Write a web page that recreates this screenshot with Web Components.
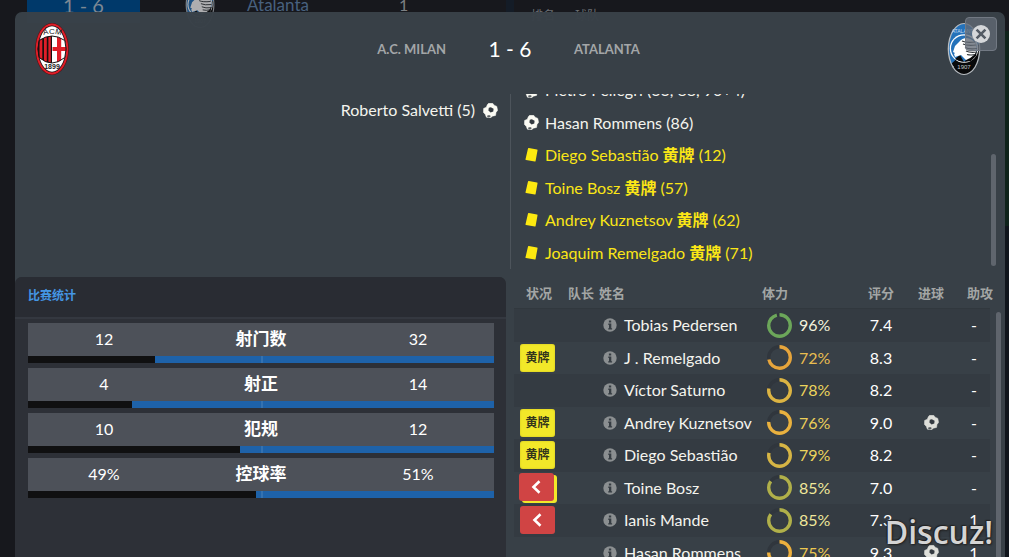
<!DOCTYPE html>
<html lang="zh-CN">
<head>
<meta charset="utf-8">
<title>A.C. Milan 1 - 6 Atalanta</title>
<style>
  html, body { margin: 0; height: 100%; }
  body {
    position: relative;
    overflow: hidden;
    background: #17181d;
    color: #f4f4ee;
    font: 16px/20px Lato, "Noto Sans CJK SC", sans-serif;
  }
</style>
</head>
<body>
<page-backdrop></page-backdrop>
<match-dialog></match-dialog>
<water-mark>Discuz!</water-mark>

<template id="backdrop">
  <style>
    :host { display: grid; grid-template-columns: 15px 1fr 8px 1fr 4px; height: 100%; overflow: hidden; }
    .gap { background: #141c27; }
    .left { display: flex; align-items: flex-start; height: 36px; margin-top: -13px; line-height: 36px; color: #48617f; }
    .score { width: 113px; margin-left: 12px; text-align: center; font-size: 20px; background: #00396a; color: #7d8893; }
    club-crest { margin: -5px 32px 0 45px; opacity: .65; }
    .name { width: 152px; font-size: 17px; }
    .pts { color: #7d8084; }
    .right { display: flex; gap: 20px; padding: 8px 17px; font-size: 12px; line-height: 16px; color: #6d7074; }
    .pitch { margin-top: 31px; background: linear-gradient(#0f231b 195px, #10151c 195px); }
  </style>
  <div></div>
  <div class="left">
    <span class="score">1 - 6</span>
    <club-crest club="atalanta" size="46"></club-crest>
    <span class="name">Atalanta</span><span class="pts">1</span>
  </div>
  <div class="gap"></div>
  <div class="right"><span>排名</span><span>球队</span></div>
  <div class="pitch"></div>
</template>

<template id="dialog">
  <style>
    :host {
      position: absolute; inset: 12px 4px 0 15px;
      display: flex; flex-direction: column; overflow: hidden;
      border-radius: 7px 7px 0 0; background: rgba(57, 65, 72, .98);
    }
    header {
      flex: none; display: grid; align-items: center; box-sizing: border-box;
      grid-template-columns: 38px 1fr 128px 1fr 34px;
      height: 82px; padding: 0 24px 8px 20px;
    }
    h2 { margin: 0; font-size: 13px; line-height: 16px; font-weight: 700; color: #a3a6a8; text-transform: uppercase; }
    .home { text-align: right; }
    .score { text-align: center; font-size: 21px; line-height: 28px; color: #fff; }
    button {
      position: absolute; top: 5px; right: 8px; width: 32px; height: 34px; padding: 0;
      display: grid; place-items: center; border: 1px solid #727983; border-radius: 4px;
      background: rgba(98, 105, 117, .78);
    }
    .events { flex: none; display: grid; grid-template-columns: 1fr 1fr; height: 175px; margin-bottom: 8px; }
    .side { display: flex; overflow: hidden; }
    .side.h { align-items: flex-start; justify-content: flex-end; padding-right: 12px; }
    .side.a { justify-content: space-between; border-left: 1px solid #4d545b; padding: 0 9px 0 13px; }
    ul { list-style: none; margin: 0; padding: 0; display: flex; flex-direction: column; }
    .a ul { justify-content: flex-end; }
    .thumb { width: 5px; height: 112px; margin-top: 60px; border-radius: 3px; background: #5f656d; }
    .lower { flex: 1; min-height: 0; display: grid; grid-template-columns: 1fr 1fr; gap: 8px; }
  </style>
  <header>
    <club-crest club="milan" size="52"></club-crest>
    <h2 class="home">A.C. Milan</h2>
    <div class="score">1 - 6</div>
    <h2>Atalanta</h2>
    <club-crest club="atalanta" size="52"></club-crest>
  </header>
  <button type="button" aria-label="Close">
    <svg width="18" height="18" viewBox="0 0 18 18"><circle cx="9" cy="9" r="9" fill="#d5d7da"/><path d="M4.6 4.6l8.8 8.8M13.4 4.6l-8.8 8.8" stroke="#555c66" stroke-width="2.6"/></svg>
  </button>
  <section class="events">
    <div class="side h">
      <ul><match-event kind="goal" side="home">Roberto Salvetti (5)</match-event></ul>
    </div>
    <div class="side a">
      <ul>
        <match-event kind="goal">Pietro Pellegri (33, 88, 90+4)</match-event>
        <match-event kind="goal">Hasan Rommens (86)</match-event>
        <match-event kind="card">Diego Sebastião <b>黄牌</b> (12)</match-event>
        <match-event kind="card">Toine Bosz <b>黄牌</b> (57)</match-event>
        <match-event kind="card">Andrey Kuznetsov <b>黄牌</b> (62)</match-event>
        <match-event kind="card">Joaquim Remelgado <b>黄牌</b> (71)</match-event>
      </ul>
      <div class="thumb"></div>
    </div>
  </section>
  <div class="lower">
    <stats-panel heading="比赛统计">
      <stat-row home="12" away="32">射门数</stat-row>
      <stat-row home="4" away="14">射正</stat-row>
      <stat-row home="10" away="12">犯规</stat-row>
      <stat-row home="49" away="51" unit="%">控球率</stat-row>
    </stats-panel>
    <player-table></player-table>
  </div>
</template>

<template id="event">
  <style>
    :host { display: flex; align-items: center; gap: 6px; height: 32px; flex: none; white-space: nowrap; }
    :host(:nth-child(even)) { height: 33px; }
    :host([side="home"]) { flex-direction: row-reverse; gap: 8px; }
    :host([kind="card"]) { color: #fbe616; }
    ::slotted(b) { font-weight: 700; }
    svg { display: block; }
    .goal, .card { display: none; }
    :host([kind="goal"]) .goal, :host([kind="card"]) .card { display: block; }
  </style>
  <ball-icon class="goal"></ball-icon>
  <svg class="card" width="15" height="14" viewBox="-1 0 15 14"><path d="M3 .6Q3.200 0 3.800.1L12 1.600Q12.700 1.700 12.500 2.400L10.600 12.900Q10.400 13.700 9.800 13.600L1 12.100Q.4 12 .5 11.300z" fill="#fde910"/></svg>
  <span><slot></slot></span>
</template>

<template id="stats">
  <style>
    :host { display: block; overflow: hidden; border-radius: 7px 7px 0 0; background: #2d3037; }
    h3 { margin: 0; padding: 0 13px; height: 40px; font-size: 12px; line-height: 38px; font-weight: 700; color: #4496e4; background: #292c33; border-bottom: 2px solid #343840; }
    .rows { display: flex; flex-direction: column; gap: 5px; padding: 4px 12px 0 13px; }
  </style>
  <h3></h3>
  <div class="rows"><slot></slot></div>
</template>

<template id="stat">
  <style>
    :host { display: block; color: #fff; }
    .line { display: grid; grid-template-columns: 1fr 1fr 1fr; gap: 5px; text-align: center; line-height: 32px; height: 33px; background: #4d5159; }
    b { font-size: 17px; }
    .bar { position: relative; display: flex; height: 7px; }
    .bar::after { content: ""; position: absolute; left: 50%; top: 0; width: 2px; height: 7px; background: rgba(255, 255, 255, .1); }
    .h { background: #101011; }
    .a { background: #1e62a9; }
  </style>
  <div class="line"><span class="hv"></span><b><slot></slot></b><span class="av"></span></div>
  <div class="bar"><div class="h"></div><div class="a"></div></div>
</template>

<template id="players">
  <style>
    :host { display: flex; justify-content: space-between; align-items: flex-start; padding-right: 4px; overflow: hidden; }
    .wrap { flex: 1; }
    table { width: 100%; table-layout: fixed; border-collapse: collapse; }
    th, td { padding: 0; text-align: left; white-space: nowrap; }
    th { height: 31px; padding-top: 2px; box-sizing: border-box; font-size: 13px; line-height: 16px; font-weight: 700; color: #a3a6a5; }
    thead { border-bottom: 1px solid #31383e; }
    td { height: 32px; line-height: 20px; }
    tbody tr:nth-child(odd) { background: #343b42; }
    tbody tr:nth-child(odd) td { height: 33px; }
    .status { width: 50px; } th.status { padding-left: 12px; }
    td.status { padding-left: 6px; box-sizing: border-box; }
    .captain { width: 32px; } th.captain { padding-left: 4px; }
    th.name { padding-left: 3px; }
    td.name { padding-left: 7px; }
    .condition { width: 98px; }
    .rating { width: 42px; text-align: center; } td.rating, td.assists { color: #fff; }
    .goals { width: 58px; text-align: center; }
    td.assists { padding-right: 2px; text-align: center; }
    th.assists { width: 30px; padding-left: 7px; }
    .cell { display: flex; align-items: center; }
    .name .cell { gap: 7px; }
    .condition .cell { gap: 7px; padding-left: 5px; }
    svg { display: block; flex: none; }
    ball-icon { margin: 0 auto; width: 15px; opacity: .85; }
    .thumb { width: 5px; align-self: stretch; margin: 35px 0 0 6px; border-radius: 3px 3px 0 0; background: #5f656d; }
  </style>
  <div class="wrap">
    <table>
      <thead><tr>
        <th class="status">状况</th><th class="captain">队长</th><th class="name">姓名</th>
        <th class="condition">体力</th><th class="rating">评分</th><th class="goals">进球</th><th class="assists">助攻</th>
      </tr></thead>
      <tbody></tbody>
    </table>
  </div>
  <div class="thumb"></div>
</template>

<template id="badge">
  <style>
    :host { display: block; width: 35px; height: 28px; border-radius: 3px; font-size: 12px; line-height: 28px; font-weight: 700; text-align: center; color: #34361c; background: #f2e829; box-shadow: inset 0 0 2px #c9bb20; }
    :host([kind^="off"]) { display: grid; place-items: center; background: #d04444; box-shadow: none; }
    :host([kind="off-booked"]) { margin-left: -1px; margin-top: -2px; box-shadow: 3px 2px 0 #f2e829; }
    svg { display: none; }
    :host([kind^="off"]) svg { display: block; }
  </style>
  <slot></slot>
  <svg width="12" height="14" viewBox="0 0 12 14"><path d="M8.500 1.300L2.500 7l6 5.700" fill="none" stroke="#fff" stroke-width="2.600"/></svg>
</template>

<template id="ball">
  <style>:host { display: block; } svg { display: block; }</style>
  <svg width="15" height="15" viewBox="0 0 15 15">
    <path d="M4.400 1.600L5.600.3 9.600.2 11.200 2.200 13.800 3.400 14.600 7.400 13 9.400 12.600 12.400 9.400 13.200 7.600 14.700 3.400 14.200 2.200 11.200.4 9.400.6 5.400 3.300 4.200z" fill="#fbfbf4" stroke="#fbfbf4" stroke-width=".5" stroke-linejoin="round"/>
    <path d="M7.800 4.200l2.800 1.500-.3 2.800-2.700 1L5.400 7.500l.4-2.700z" fill="#343a40"/>
    <path d="M4.600 12.200l2.600.1.400 1.500-2 .6-1.600-.9z" fill="#5a5f63"/>
  </svg>
</template>

<template id="milan">
  <svg viewBox="0 0 34 52">
    <defs><clipPath id="mc"><path d="M4.200 17.500Q17 8.500 29.800 17.500Q32.400 26 29.800 34.500Q17 45.500 4.200 34.500Q1.600 26 4.200 17.500z"/></clipPath></defs>
    <ellipse cx="17" cy="26" rx="16.800" ry="26" fill="#5f0d12"/>
    <ellipse cx="17" cy="26" rx="16.200" ry="25.400" fill="#e01e28"/>
    <ellipse cx="17" cy="26" rx="14.200" ry="23.500" fill="#171214"/>
    <ellipse cx="17" cy="26" rx="13.400" ry="22.700" fill="#fff"/>
    <g clip-path="url(#mc)">
      <path d="M0 10h17v32H0z" fill="#17100f"/><path d="M17 10h17v32H17z" fill="#fff"/>
      <path d="M4.500 10h2.800v32H4.500zM9 10h2.800v32H9zM13.400 10h2.400v32h-2.400zM22 10h4.200v32H22zM17.500 24H34v4H17.500z" fill="#e01e28"/>
    </g>
    <path d="M4.200 17.500Q17 8.500 29.800 17.500Q32.400 26 29.800 34.500Q17 45.500 4.200 34.500Q1.600 26 4.200 17.500z" fill="none" stroke="#171214"/>
    <g font-family="Liberation Sans" font-size="8" fill="#222" text-anchor="middle">
      <text x="11" y="11.500" transform="rotate(-12 11 11)">A</text><text x="17" y="10.500">C</text><text x="23" y="11.500" transform="rotate(12 23 11)">M</text>
      <text x="17" y="45.500" font-size="7" font-weight="700">1899</text>
    </g>
  </svg>
</template>
<template id="atalanta">
  <svg viewBox="0 0 34 52">
    <defs><clipPath id="ac"><ellipse cx="17" cy="26" rx="15" ry="25"/></clipPath></defs>
    <ellipse cx="17" cy="26" rx="16.300" ry="26" fill="#b9bec3"/>
    <g clip-path="url(#ac)">
      <path d="M0 0h34v26L6 41 0 46z" fill="#2472ba"/>
      <path d="M34 20v32H3V42L14 32z" fill="#08090a"/>
      <path d="M3 39l4 5-3 3z" fill="#fff"/>
      <circle cx="17" cy="25.500" r="14.300" fill="#fff"/><circle cx="17" cy="25.500" r="13" fill="#2472ba"/>
      <path d="M17 39l5-5 8-6-1 5-5 5z" fill="#08090a"/><path d="M8 36l5-4 4 7-5-1z" fill="#08090a"/>
      <path d="M12 19q3-4 8-4 6 1 9 6 2 7-2 11-3 3-8 5l-5-5-6 2-1-3 1-1-2-1 2-6z" fill="#fff"/>
      <path d="M15 18q4 2 13 1M16 21q4 2 13 1M18 24.500q4 2 12 1M19 28q4 2 11 1M20 31.500q4 1 8 0" fill="none" stroke="#33373b" stroke-width="1.100"/>
    </g>
    <g font-family="Liberation Sans" font-size="5" text-anchor="middle">
      <text x="17" y="10" fill="#c4dcf0">ATALANTA</text><text x="17" y="46" font-size="6" fill="#c4c8cc">1907</text>
    </g>
  </svg>
</template>

<script>
  const clone = id => document.getElementById(id).content.cloneNode(true);
  const define = (tag, id, setup) => customElements.define(tag, class extends HTMLElement {
    connectedCallback() {
      if (this.shadowRoot) return;
      const root = this.attachShadow({ mode: 'open' });
      root.append(clone(id));
      if (setup) setup(this, root);
    }
  });

  customElements.define('club-crest', class extends HTMLElement {
    connectedCallback() {
      if (this.shadowRoot) return;
      const root = this.attachShadow({ mode: 'open' });
      root.innerHTML = `<style>:host{display:block}svg{display:block;height:${this.getAttribute('size')}px}</style>`;
      root.append(clone(this.getAttribute('club')));
    }
  });

  customElements.define('water-mark', class extends HTMLElement {
    connectedCallback() {
      this.attachShadow({ mode: 'open' }).innerHTML = `<style>
        :host { position: absolute; right: 16px; bottom: 5px; pointer-events: none;
          font: 600 32px/40px "Open Sans", sans-serif; color: #d4d4d4;
          text-shadow: 0 0 2px #222, 1px 1px 2px #222, -1px -1px 1px #222; }
      </style><slot></slot>`;
    }
  });

  define('ball-icon', 'ball');
  define('status-badge', 'badge');
  define('match-event', 'event', (el) => el.setAttribute('role', 'listitem'));
  define('stats-panel', 'stats', (el, root) => {
    root.querySelector('h3').textContent = el.getAttribute('heading');
  });
  define('stat-row', 'stat', (el, root) => {
    const unit = el.getAttribute('unit') || '';
    const home = el.getAttribute('home'), away = el.getAttribute('away');
    root.querySelector('.hv').textContent = home + unit;
    root.querySelector('.av').textContent = away + unit;
    root.querySelector('.h').style.flex = `${home} 0 0`;
    root.querySelector('.a').style.flex = `${away} 0 0`;
  });

  const players = [
    ['', 'Tobias Pedersen', 96, '#6ca65a', '#f2f3dc', '7.4', 0, '-'],
    ['card', 'J . Remelgado', 72, '#e6a53c', '#e9bd50', '8.3', 0, '-'],
    ['', 'Víctor Saturno', 78, '#dcb443', '#ecd45c', '8.2', 0, '-'],
    ['card', 'Andrey Kuznetsov', 76, '#e9b13f', '#ebcf5a', '9.0', 1, '-'],
    ['card', 'Diego Sebastião', 79, '#d6b545', '#ecd45c', '8.2', 0, '-'],
    ['off-booked', 'Toine Bosz', 85, '#b0b04a', '#efe79a', '7.0', 0, '-'],
    ['off', 'Ianis Mande', 85, '#b0b04a', '#efe79a', '7.3', 0, '1'],
    ['', 'Hasan Rommens', 75, '#edb03e', '#ecc850', '9.3', 1, '1']
  ];
  const info = `<svg width="14" height="14" viewBox="0 0 14 14"><circle cx="7" cy="7" r="6.700" fill="#8b8f91"/><path d="M5.900 2.400h2.300v2H5.900zM5.300 5.600h3v4.700h.8v1.300H5.200v-1.300H6V6.900h-.7z" fill="#363d43"/></svg>`;
  const ring = (value, colour) => `<svg width="25" height="25" viewBox="0 0 25 25">
    <circle cx="12.500" cy="12.500" r="10.800" fill="none" stroke="#30363d" stroke-width="3.400"/>
    <circle cx="12.500" cy="12.500" r="10.800" fill="none" stroke="${colour}" stroke-width="3.400" pathLength="100" stroke-dasharray="${value} 100" transform="rotate(-90 12.500 12.500)"/></svg>`;
  const badge = kind => kind ? `<status-badge kind="${kind}">${kind === 'card' ? '黄牌' : ''}</status-badge>` : '';

  define('player-table', 'players', (el, root) => {
    root.querySelector('tbody').innerHTML = players.map(([kind, name, fit, arc, tint, rating, goal, assists]) => `<tr>
      <td class="status">${badge(kind)}</td><td class="captain"></td>
      <td class="name"><div class="cell">${info}<span>${name}</span></div></td>
      <td class="condition"><div class="cell">${ring(fit, arc)}<span style="color:${tint}">${fit}%</span></div></td>
      <td class="rating">${rating}</td>
      <td class="goals">${goal ? '<ball-icon></ball-icon>' : ''}</td>
      <td class="assists">${assists}</td></tr>`).join('');
  });
  define('match-dialog', 'dialog');
  define('page-backdrop', 'backdrop');
</script>
</body>
</html>
